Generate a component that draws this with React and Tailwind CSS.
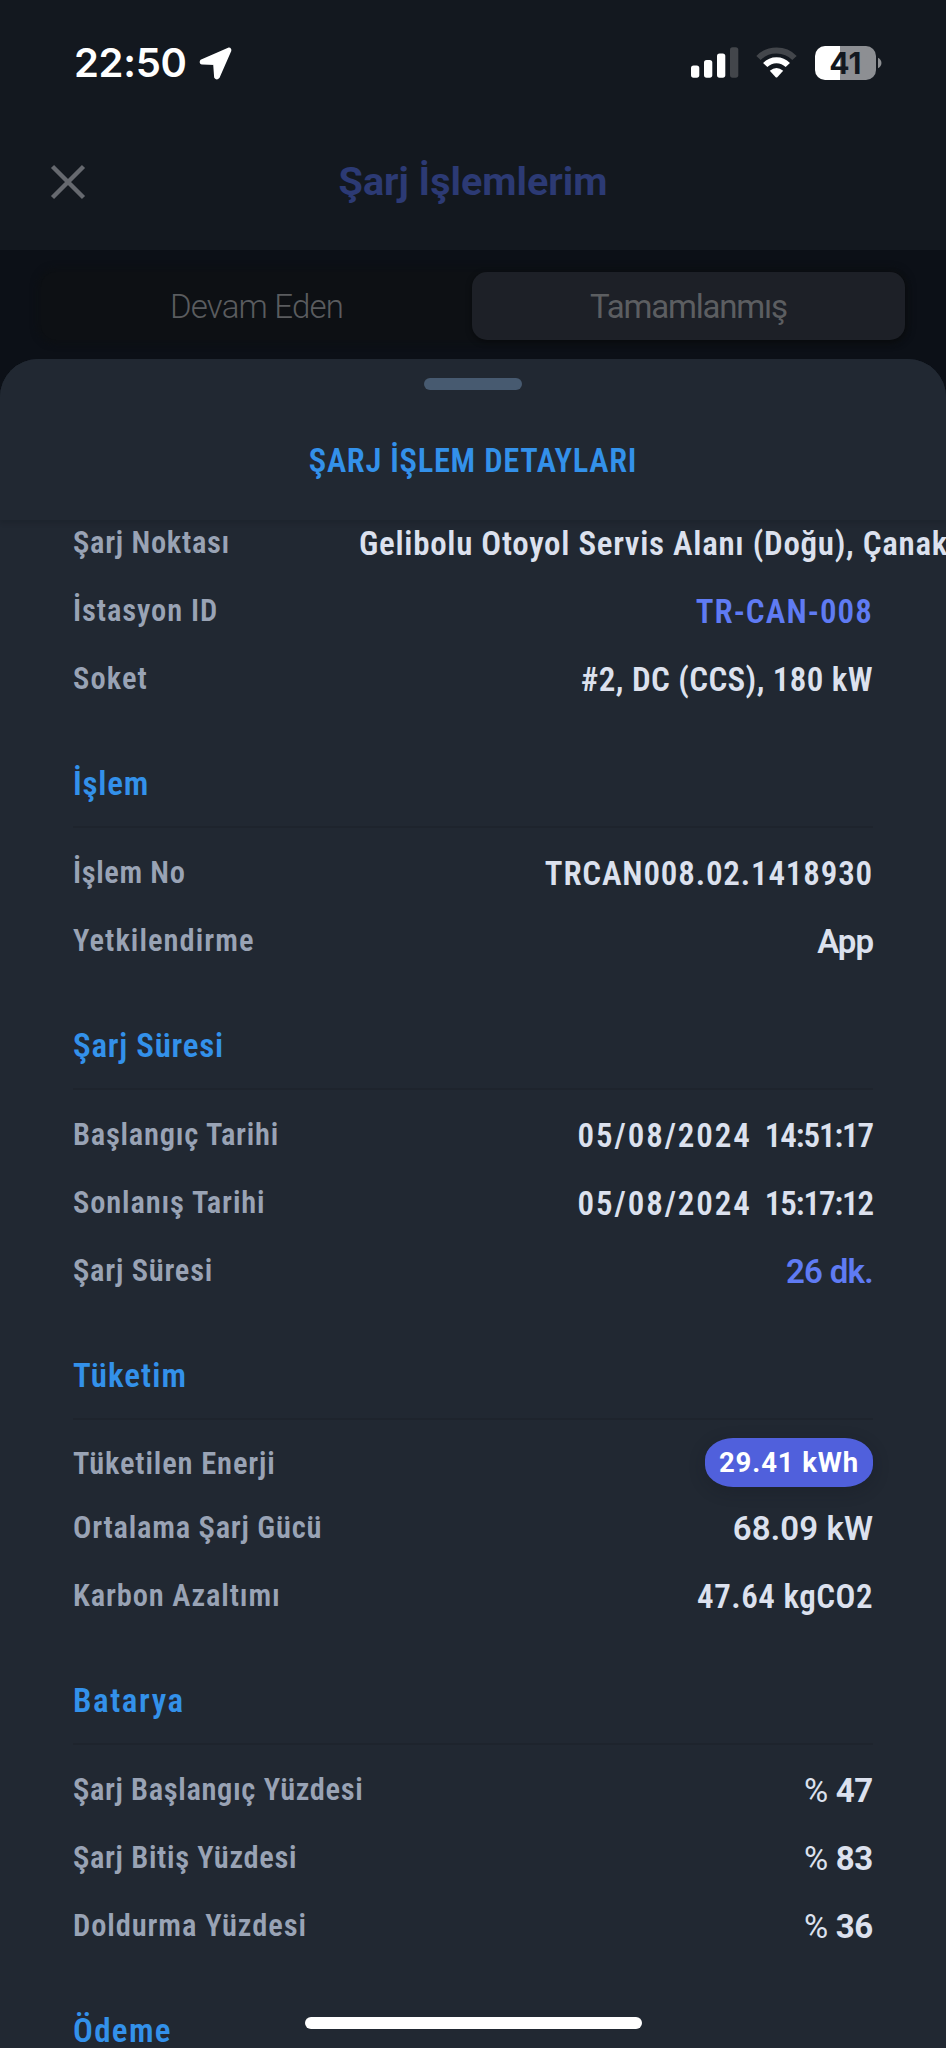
const sections = [
  {
    rows: [
      { label: 'Şarj Noktası', labelClass: 'w-[286px] tracking-[0.7px]', value: 'Gelibolu Otoyol Servis Alanı (Doğu), Çanak', valueClass: 'text-[#dce1ee] font-stretch-condensed tracking-[0.7px]' },
      { label: 'İstasyon ID', labelClass: 'tracking-[0.9px]', value: 'TR-CAN-008', valueClass: 'text-[#5f7bf3] font-stretch-condensed tracking-[1.1px]' },
      { label: 'Soket', labelClass: 'tracking-[1.1px]', value: '#2, DC (CCS), 180 kW', valueClass: 'text-[#dce1ee] font-stretch-condensed tracking-[0.4px]' },
    ],
  },
  {
    title: 'İşlem',
    titleClass: 'tracking-[0.8px]',
    rows: [
      { label: 'İşlem No', labelClass: 'tracking-[0.6px]', value: 'TRCAN008.02.1418930', valueClass: 'text-[#dce1ee] font-stretch-condensed tracking-[0.83px]' },
      { label: 'Yetkilendirme', labelClass: 'tracking-[1.05px]', value: 'App', valueClass: 'text-[#dce1ee] tracking-[-1px]' },
    ],
  },
  {
    title: 'Şarj Süresi',
    titleClass: 'tracking-[0.75px]',
    rows: [
      { label: 'Başlangıç Tarihi', labelClass: 'tracking-[0.75px]', date: '05/08/2024', time: '14:51:17' },
      { label: 'Sonlanış Tarihi', labelClass: 'tracking-[0.85px]', date: '05/08/2024', time: '15:17:12' },
      { label: 'Şarj Süresi', labelClass: 'tracking-[0.75px]', value: '26 dk.', valueClass: 'text-[#5f7bf3] tracking-[-0.7px]' },
    ],
  },
  {
    title: 'Tüketim',
    titleClass: 'tracking-[1.1px]',
    rows: [
      { label: 'Tüketilen Enerji', labelClass: 'pt-[4px] tracking-[0.85px]', value: '29.41 kWh', badge: true },
      { label: 'Ortalama Şarj Gücü', labelClass: 'tracking-[0.75px]', value: '68.09 kW', valueClass: 'text-[#dce1ee] tracking-[0.1px]' },
      { label: 'Karbon Azaltımı', labelClass: 'tracking-[0.85px]', value: '47.64 kgCO2', valueClass: 'text-[#dce1ee] font-stretch-condensed tracking-[0.5px]' },
    ],
  },
  {
    title: 'Batarya',
    titleClass: 'tracking-[1.6px]',
    rows: [
      { label: 'Şarj Başlangıç Yüzdesi', labelClass: 'tracking-[0.62px]', percent: 47 },
      { label: 'Şarj Bitiş Yüzdesi', labelClass: 'tracking-[0.65px]', percent: 83 },
      { label: 'Doldurma Yüzdesi', labelClass: 'tracking-[0.9px]', percent: 36 },
    ],
  },
  { title: 'Ödeme', titleClass: 'tracking-[1.3px]', rows: [] },
];

function StatusBar() {
  return (
    <div className="h-[126px] pl-[74px] pr-[64px] flex items-center justify-between text-white">
      <div className="flex items-center gap-[12px]">
        <span className="font-[Inter,sans-serif] text-[40px] leading-none font-semibold tracking-[-0.3px]">22:50</span>
        <svg width="33" height="33" viewBox="0 0 33 33" className="mt-[1px]">
          <path d="M29.8 2.3 L2.8 14 Q1.8 15.6 3.2 15.9 L15.8 16.2 L16.8 30 Q17.8 31.4 19 30 L30.6 3.6 Q30.9 2.2 29.8 2.3 Z" fill="white" stroke="white" strokeWidth="3.4" strokeLinejoin="round" />
        </svg>
      </div>

      <div className="flex items-center">
        <svg width="48" height="32" viewBox="0 0 48 32">
          <rect x="0" y="18.5" width="8.3" height="12.2" rx="2.6" fill="white" />
          <rect x="13" y="13" width="8.3" height="17.7" rx="2.6" fill="white" />
          <rect x="26" y="6.5" width="8.3" height="24.2" rx="2.6" fill="white" />
          <rect x="39" y="0.3" width="8.3" height="30.4" rx="2.6" fill="#43464b" />
        </svg>
        <svg width="41" height="32" viewBox="0 0 41 32" className="ml-[17px] mr-[18px]">
          <path d="M2.5 11 C12 1 29 1 38.5 11" fill="none" stroke="#43464b" strokeWidth="6" />
          <path d="M9.2 18 C15.5 11.5 25.5 11.5 31.8 18" fill="none" stroke="white" strokeWidth="6" />
          <path d="M13.8 23.8 Q20.5 18 27.2 23.8 L21.3 30.2 Q20.5 31 19.7 30.2 Z" fill="white" />
        </svg>
        <div className="w-[61px] h-[34px] rounded-[10px] overflow-hidden bg-linear-to-r from-white from-41% to-[#8d8f93] to-41% flex items-center justify-center">
          <span className="font-[Inter,sans-serif] text-[30px] leading-none font-bold tracking-[0.3px] text-[#13181f]">41</span>
        </div>
        <svg width="5" height="12" viewBox="0 0 5 12" className="ml-[1px]">
          <path d="M1 0.8 C5.6 3 5.6 9 1 11.2 Z" fill="#8d8f93" />
        </svg>
      </div>
    </div>
  );
}

function Value({ row }) {
  if (row.badge) {
    return (
      <span className="w-[168px] h-[49px] mt-[2px] rounded-[28px/22px] bg-[#5060dc] shadow-[0_4px_16px_rgba(20,24,34,0.3)] text-white text-[27.5px] font-bold tracking-[0.9px] flex items-center justify-center">
        {row.value}
      </span>
    );
  }
  if (row.percent) {
    return (
      <span className="text-[33px] leading-[68px] pt-[2px] h-[68px] text-[#dce1ee] font-bold tracking-[-0.3px]">
        <span className="font-normal">%</span> {row.percent}
      </span>
    );
  }
  if (row.date) {
    return (
      <span className="flex gap-[13px] text-[33px] leading-[68px] pt-[2px] h-[68px] font-semibold font-stretch-condensed text-[#dce1ee]">
        <span className="tracking-[1.9px]">{row.date}</span>
        <span className="tracking-[-1.1px]">{row.time}</span>
      </span>
    );
  }
  return <span className={`text-[33px] leading-[68px] pt-[2px] h-[68px] font-semibold whitespace-nowrap ${row.valueClass}`}>{row.value}</span>;
}

function Section({ section }) {
  return (
    <section>
      {section.title && (
        <div className="h-[116px] mb-[10px] border-b-2 border-[#1e242d] flex items-end">
          <h3 className={`text-[33px] leading-[40px] pb-[22px] font-semibold font-stretch-condensed text-[#3391ea] ${section.titleClass}`}>{section.title}</h3>
        </div>
      )}
      {section.rows.map((row) => (
        <div key={row.label} className={`flex items-center justify-between ${row.badge ? 'h-[63px]' : 'h-[68px]'}`}>
          <span className={`shrink-0 pt-[1px] text-[30.5px] font-semibold font-stretch-condensed text-[#99a3b5] ${row.labelClass}`}>{row.label}</span>
          <Value row={row} />
        </div>
      ))}
    </section>
  );
}

function App() {
  return (
    <div className="w-[946px] h-[2048px] bg-[#0c1017] font-[Roboto,sans-serif] overflow-hidden flex flex-col relative">
      <header className="h-[250px] shrink-0 bg-[#13181f]">
        <StatusBar />
        <div className="h-[112px] px-[50px] grid grid-cols-[36px_1fr_36px] items-center">
          <svg width="36" height="36" viewBox="0 0 36 36" className="text-[#66696f]">
            <path d="M2.5 2.5 L33.5 33.5 M33.5 2.5 L2.5 33.5" fill="none" stroke="currentColor" strokeWidth="4.4" />
          </svg>
          <h1 className="text-center text-[39.5px] leading-none font-bold text-[#2c3a74]">Şarj İşlemlerim</h1>
        </div>
      </header>

      <div className="h-[109px] shrink-0 pt-[22px] px-[41px]">
        <div className="h-[68px] flex rounded-[15px] bg-[#0d1014] shadow-[0_0_6px_4px_#0d1014]">
          <div className="w-[431px] flex items-center justify-center text-[33px] font-light text-[#5a5c5f] tracking-[-0.8px] pt-[1px]">Devam Eden</div>
          <div className="flex-1 flex items-center justify-center text-[33px] text-[#5c5e61] tracking-[-1.2px] pt-[1px] rounded-[15px] bg-[#1d2027] shadow-[0_2px_6px_rgba(0,0,0,0.4)]">Tamamlanmış</div>
        </div>
      </div>

      <main className="flex-1 min-h-0 rounded-t-[38px] bg-[#212832] overflow-hidden flex flex-col">
        <div className="h-[161px] shrink-0 pt-[19px] flex flex-col items-center shadow-[0_3px_4px_rgba(20,24,32,0.25)] relative z-10 bg-[#212832]">
          <div className="w-[98px] h-[12px] rounded-full bg-[#475a70]" />
          <h2 className="mt-[51px] text-[32.5px] leading-[40px] font-semibold font-stretch-condensed tracking-[0.72px] text-[#3391ea]">ŞARJ İŞLEM DETAYLARI</h2>
        </div>
        {/* content scrolled slightly under the sheet header */}
        <div className="-mt-[12px] px-[73px]">
          {sections.map((section, i) => (
            <Section key={i} section={section} />
          ))}
        </div>
      </main>

      <div className="absolute bottom-[19.5px] left-[305px] w-[337px] h-[12px] rounded-full bg-white" />
    </div>
  );
}

export default App;
